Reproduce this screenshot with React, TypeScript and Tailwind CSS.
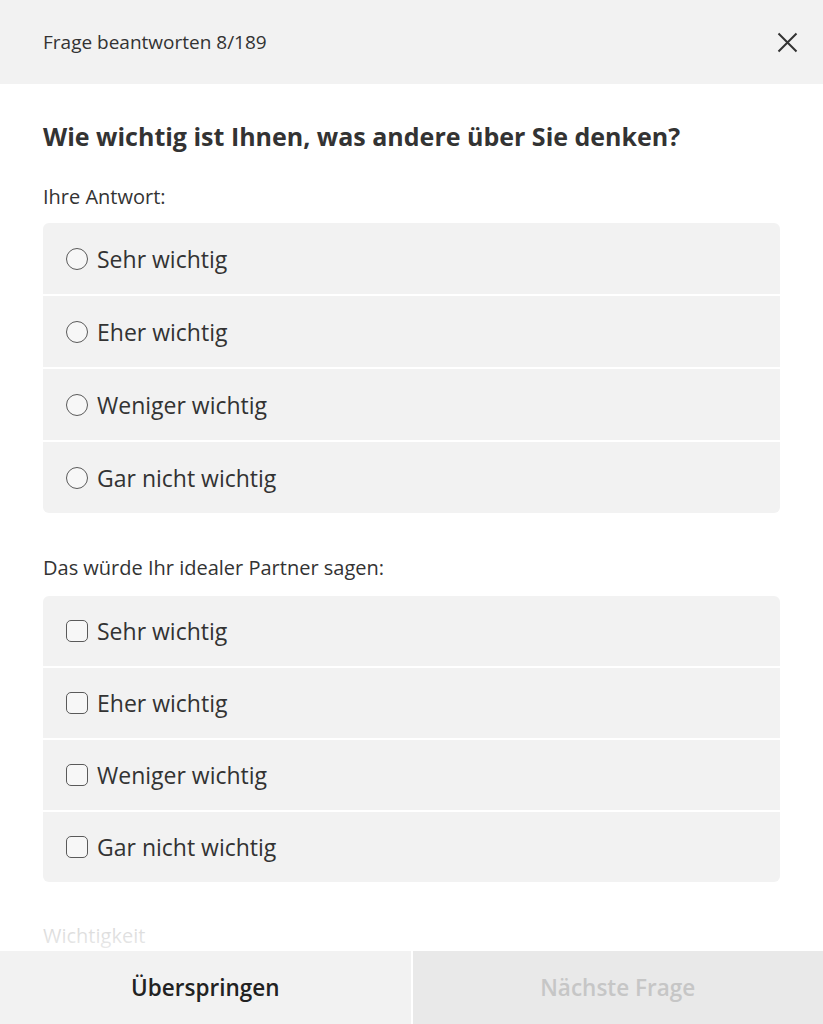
import { FunctionComponent } from "react";

const options = ["Sehr wichtig", "Eher wichtig", "Weniger wichtig", "Gar nicht wichtig"];

const OptionGroup: FunctionComponent<{ kind: "radio" | "checkbox"; rowClass: string }> = ({
  kind,
  rowClass,
}) => {
  return (
    <div className="flex flex-col gap-[2px] overflow-hidden rounded-[6px]">
      {options.map((label) => (
        <div key={label} className={`flex items-center bg-[#f2f2f2] pl-[23px] ${rowClass}`}>
          <span
            className={
              kind === "radio"
                ? "h-[22px] w-[22px] shrink-0 rounded-full border border-[#5a5a5a] bg-[#f7f7f7]"
                : "h-[22px] w-[22px] shrink-0 rounded-[5px] border border-[#5a5a5a] bg-[#f7f7f7]"
            }
          />
          <span className="ml-[9px] text-[23px] leading-[30px] text-[#333]">{label}</span>
        </div>
      ))}
    </div>
  );
};

export default function App() {
  return (
    <div className="flex h-screen flex-col bg-white font-['Open_Sans',sans-serif] text-[#333]">
      <header className="flex h-[84px] shrink-0 items-center justify-between bg-[#f2f2f2] pl-[43px] pr-[25px]">
        <span className="text-[19px] leading-[26px] text-[#333]">Frage beantworten 8/189</span>
        <svg width="21" height="21" viewBox="0 0 21 21" className="text-[#333]">
          <path d="M1.5 1.5 L19.5 19.5 M19.5 1.5 L1.5 19.5" stroke="currentColor" strokeWidth="2" />
        </svg>
      </header>

      <main className="relative flex-1 overflow-hidden px-[43px] pt-[36px]">
        <h1 className="text-[25px] font-bold leading-[32px] text-[#333]">
          Wie wichtig ist Ihnen, was andere über Sie denken?
        </h1>
        <p className="mt-[32px] text-[20px] leading-[26px] text-[#333]">Ihre Antwort:</p>
        <div className="mt-[13px]">
          <OptionGroup kind="radio" rowClass="h-[71px]" />
        </div>

        <p className="mt-[42px] text-[20px] leading-[26px] text-[#333]">
          Das würde Ihr idealer Partner sagen:
        </p>
        <div className="mt-[15px]">
          <OptionGroup kind="checkbox" rowClass="h-[70px]" />
        </div>

        <p className="mt-[41px] text-[20px] leading-[26px] text-[#333]">Wichtigkeit</p>

        <div className="pointer-events-none absolute bottom-0 left-0 right-0 h-[60px] bg-gradient-to-b from-white/0 via-white/80 to-white/90" />
      </main>

      <footer className="flex h-[73px] shrink-0 gap-[2px]">
        <button className="flex flex-1 items-center justify-center bg-[#f2f2f2] text-[22.5px] font-semibold text-[#222]">
          Überspringen
        </button>
        <button className="flex flex-1 items-center justify-center bg-[#e9e9e9] text-[22.5px] font-semibold text-[#c6c6c6]">
          Nächste Frage
        </button>
      </footer>
    </div>
  );
}
